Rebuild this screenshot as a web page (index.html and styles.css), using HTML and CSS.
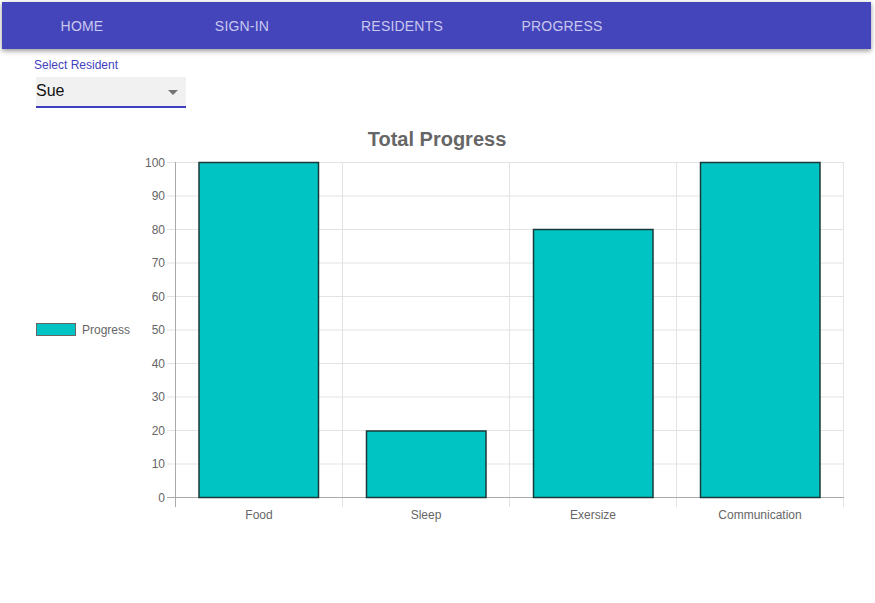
FILE: index.html
```html
<!DOCTYPE html>
<html>
<head>
<meta charset="utf-8">
<link rel="stylesheet" href="styles.css">
</head>
<body>
<nav class="navbar">
  <a class="tab">HOME</a>
  <a class="tab">SIGN-IN</a>
  <a class="tab">RESIDENTS</a>
  <a class="tab">PROGRESS</a>
</nav>
<div class="field">
  <label class="field-label">Select Resident</label>
  <div class="select">
    <span class="select-value">Sue</span>
    <svg class="select-arrow" width="10" height="5" viewBox="0 0 10 5"><path d="M0 0 L10 0 L5 5 Z" fill="#757575"/></svg>
  </div>
</div>
<svg class="chart" width="875" height="420" viewBox="0 120 875 420">
  <text x="437" y="146" class="title" text-anchor="middle">Total Progress</text>
  <g class="legend">
    <rect x="36.5" y="323.5" width="39" height="12" fill="#00c4c4" stroke="#666"/>
    <text x="82" y="334" class="tick">Progress</text>
  </g>
  <g class="grid" stroke="#e3e3e3" stroke-width="1">
    <line x1="167" y1="162.5" x2="844" y2="162.5"/>
    <line x1="167" y1="196" x2="844" y2="196"/>
    <line x1="167" y1="229.5" x2="844" y2="229.5"/>
    <line x1="167" y1="263" x2="844" y2="263"/>
    <line x1="167" y1="296.5" x2="844" y2="296.5"/>
    <line x1="167" y1="330" x2="844" y2="330"/>
    <line x1="167" y1="363.5" x2="844" y2="363.5"/>
    <line x1="167" y1="397" x2="844" y2="397"/>
    <line x1="167" y1="430.5" x2="844" y2="430.5"/>
    <line x1="167" y1="464" x2="844" y2="464"/>
    <line x1="342.5" y1="162" x2="342.5" y2="507"/>
    <line x1="509.5" y1="162" x2="509.5" y2="507"/>
    <line x1="676.5" y1="162" x2="676.5" y2="507"/>
    <line x1="843.5" y1="162" x2="843.5" y2="507"/>
  </g>
  <g stroke="#aaa" stroke-width="1">
    <line x1="175.5" y1="162" x2="175.5" y2="507"/>
    <line x1="167" y1="497.5" x2="844" y2="497.5"/>
  </g>
  <g class="bars" fill="#00c4c4" stroke="#1a3a3a" stroke-width="1.5">
    <rect x="199" y="162.5" width="119.5" height="335"/>
    <rect x="366.5" y="431" width="119.5" height="66.5"/>
    <rect x="533.5" y="229.5" width="119.5" height="268"/>
    <rect x="700.5" y="162.5" width="119.5" height="335"/>
  </g>
  <g class="tick" text-anchor="end">
    <text x="165" y="166.5">100</text>
    <text x="165" y="200">90</text>
    <text x="165" y="233.5">80</text>
    <text x="165" y="267">70</text>
    <text x="165" y="300.5">60</text>
    <text x="165" y="334">50</text>
    <text x="165" y="367.5">40</text>
    <text x="165" y="401">30</text>
    <text x="165" y="434.5">20</text>
    <text x="165" y="468">10</text>
    <text x="165" y="501.5">0</text>
  </g>
  <g class="tick" text-anchor="middle">
    <text x="259" y="519">Food</text>
    <text x="426" y="519">Sleep</text>
    <text x="593" y="519">Exersize</text>
    <text x="760" y="519">Communication</text>
  </g>
</svg>
</body>
</html>
```
FILE: styles.css
```css
html, body {
  margin: 0;
  padding: 0;
  background: #fff;
  font-family: "Liberation Sans", Arial, sans-serif;
}
.navbar {
  display: flex;
  height: 47px;
  margin: 2px 4px 0 2px;
  background: #4545bb;
  box-shadow: 0 2px 4px rgba(0,0,0,0.3), 0 1px 8px rgba(0,0,0,0.15);
}
.tab {
  width: 160px;
  display: flex;
  align-items: center;
  justify-content: center;
  color: #c8c8ee;
  font-size: 14px;
  font-weight: 500;
  letter-spacing: 0.2px;
  padding-top: 1px;
}
.field {
  display: flex;
  flex-direction: column;
  align-items: flex-start;
  padding: 9px 0 0 34px;
}
.field-label {
  font-size: 12px;
  color: #3f3fc0;
  line-height: 14px;
}
.select {
  margin: 5px 0 0 2px;
  width: 150px;
  height: 29px;
  background: #f1f1f1;
  border-bottom: 2px solid #3f3fc0;
  display: flex;
  align-items: center;
  justify-content: space-between;
  box-sizing: content-box;
}
.select-value {
  font-size: 16px;
  color: #111;
  padding-bottom: 2px;
}
.select-arrow {
  margin-right: 8px;
  margin-top: 2px;
}
.chart {
  display: block;
  margin-top: 12px;
}
.title {
  font-family: "Liberation Sans", Arial, sans-serif;
  font-size: 20px;
  font-weight: bold;
  fill: #666;
}
.tick {
  font-family: "Liberation Sans", Arial, sans-serif;
  font-size: 12px;
  fill: #666;
}
```
